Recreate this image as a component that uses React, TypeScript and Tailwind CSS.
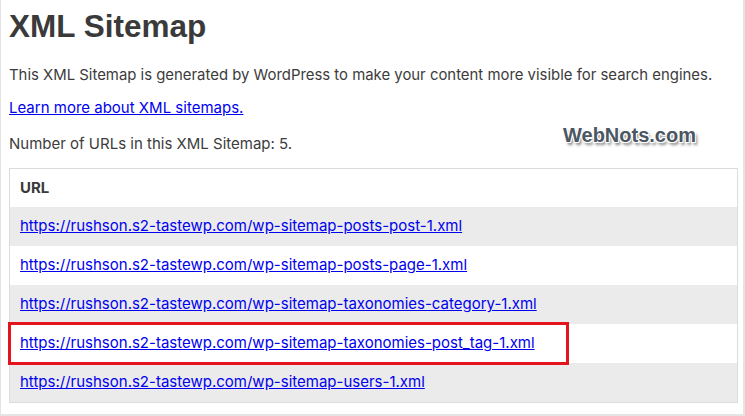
import React from "react";

const urls = [
  "https://rushson.s2-tastewp.com/wp-sitemap-posts-post-1.xml",
  "https://rushson.s2-tastewp.com/wp-sitemap-posts-page-1.xml",
  "https://rushson.s2-tastewp.com/wp-sitemap-taxonomies-category-1.xml",
  "https://rushson.s2-tastewp.com/wp-sitemap-taxonomies-post_tag-1.xml",
  "https://rushson.s2-tastewp.com/wp-sitemap-users-1.xml",
];

export default function App() {
  return (
    <div className="w-[745px] h-[416px] overflow-hidden bg-white border-r-2 border-b-2 border-l border-[#e4e4e4] font-['Inter',sans-serif] text-[#3c3c3c] relative">
      <div className="pl-[8px] pr-[6px]">
        <h1 className="text-[31.5px] font-bold leading-[38px] pt-[7px] text-[#3a3a3a] font-['Liberation_Sans',Arial,sans-serif]">XML Sitemap</h1>
        <p className="text-[14.9px] leading-[20px] mt-[20px]">
          This XML Sitemap is generated by WordPress to make your content more visible for search engines.
        </p>
        <p className="text-[15px] leading-[20px] mt-[13px]">
          <a href="#" className="text-[#0000ee] underline">Learn more about XML sitemaps.</a>
        </p>
        <p className="text-[15px] leading-[20px] mt-[16px]">Number of URLs in this XML Sitemap: 5.</p>
        <div className="mt-[14px] w-[729px] border border-[#dcdcdc]">
          <div className="h-[38px] flex items-center pl-[10px] font-bold text-[15px] text-[#3a3a3a] bg-white">URL</div>
          {urls.map((u, i) => (
            <div
              key={u}
              className={`h-[39px] flex items-center pl-[10px] text-[15px] ${i % 2 === 0 ? "bg-[#ebebeb]" : "bg-white"}`}
            >
              <a href="#" className="text-[#0000ee] underline">{u}</a>
            </div>
          ))}
        </div>
      </div>
      <div className="absolute left-[7px] top-[322px] w-[561px] h-[43px] border-[3px] border-[#e3141b]"></div>
      <div className="absolute left-[562px] top-[120px] text-[20px] font-bold text-[#4b5663] font-['Liberation_Sans',Arial,sans-serif] [text-shadow:-1px_-1px_0_#fff,1px_-1px_0_#fff,-1px_1px_0_#fff,1px_1px_0_#fff,2px_3px_3px_#777]">
        WebNots.com
      </div>
    </div>
  );
}
